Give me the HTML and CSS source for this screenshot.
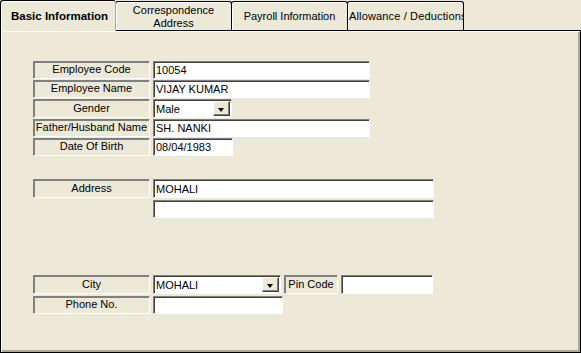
FILE: index.html
```html
<!DOCTYPE html>
<html lang="en">
<head>
  <meta charset="UTF-8"/>
  <title>Employee Details</title>
  <link rel="stylesheet" href="styles.css">
</head>
<body>

  <!-- Tab strip -->
  <div class="tabs">
    <div class="tab active">Basic Information</div>
    <div class="tab two-line">Correspondence<br>Address</div>
    <div class="tab">Payroll Information</div>
    <div class="tab">Allowance / Deductions</div>
  </div>

  <!-- Basic Information page -->
  <div class="panel">
    <div class="group">
      <div class="row">
        <div class="label">Employee Code</div>
        <div class="field w-long">10054</div>
      </div>
      <div class="row">
        <div class="label">Employee Name</div>
        <div class="field w-long">VIJAY KUMAR</div>
      </div>
      <div class="row tall">
        <div class="label">Gender</div>
        <div class="field combo w-gender">Male<span class="drop"></span></div>
      </div>
      <div class="row">
        <div class="label">Father/Husband Name</div>
        <div class="field w-long">SH. NANKI</div>
      </div>
      <div class="row">
        <div class="label">Date Of Birth</div>
        <div class="field w-date">08/04/1983</div>
      </div>
    </div>

    <div class="group address">
      <div class="row tall">
        <div class="label">Address</div>
        <div class="field w-addr">MOHALI</div>
      </div>
      <div class="row">
        <div class="spacer"></div>
        <div class="field w-addr"></div>
      </div>
    </div>

    <div class="group city">
      <div class="row tall">
        <div class="label">City</div>
        <div class="field combo w-city">MOHALI<span class="drop"></span></div>
        <div class="label small">Pin Code</div>
        <div class="field w-pin"></div>
      </div>
      <div class="row">
        <div class="label">Phone No.</div>
        <div class="field w-phone"></div>
      </div>
    </div>
  </div>

</body>
</html>
```

FILE: styles.css
```css
:root {
  --face: #ece9d8;
  --shadow: #808080;
  --dark: #404040;
  --edge: #aca899;
  --font: 'Liberation Sans', Arial, sans-serif;
}
* { margin:0; padding:0; box-sizing:border-box }
html, body { width:100%; height:100%; overflow:hidden }
body {
  background: var(--face);
  font-family: var(--font);
  font-size: 11px;
  color: #000;
}

/* Tabs */
.tabs {
  display:flex; align-items:flex-end;
  height:30px;
  position:relative; z-index:1;
}
.tab {
  width:117px; height:29px;
  margin-left:-1px;
  border:1px solid #000; border-bottom:none;
  border-radius:3px 3px 0 0;
  box-shadow: inset 1px 1px #fff;
  background: var(--face);
  display:flex; align-items:center; justify-content:center;
  text-align:center; white-space:nowrap;
  overflow:hidden;
  line-height:13px;
  padding-top:1px;
}
.tab:last-child { justify-content:flex-start; padding-left:1px; letter-spacing:0.15px }
.tab.active {
  width:116px; height:31px;
  margin-left:0; margin-bottom:-1px;
  border-right-color: var(--edge);
  font-weight:bold;
  font-size:11.5px;
  justify-content:flex-start;
  padding-left:10px;
  z-index:2;
}

/* Page */
.panel {
  height:323px;
  border:1px solid #000;
  box-shadow: inset 1px 1px #fff, inset -2px -2px var(--edge);
  padding:30px 0 0 32px;
}
.group { display:flex; flex-direction:column; gap:1px }
.group.address { margin-top:23px; gap:2px }
.group.city { margin-top:57px; gap:2px }

.row { display:flex; gap:3px; height:18px }
.row.tall { height:19px }

.label, .field {
  height:100%;
  border:1px solid;
  border-color: var(--shadow) #fff #fff var(--shadow);
  box-shadow: inset 1px 1px var(--dark);
  display:flex; align-items:center;
}
.label {
  width:117px;
  justify-content:center;
  background: var(--face);
  box-shadow: inset 1px 1px var(--shadow);
  padding-bottom:2px;
}
.label.small { width:54px }
.spacer { width:117px }
.field {
  background:#fff;
  padding-left:2px;
  position:relative;
}
.w-long  { width:217px }
.w-gender{ width:79px }
.w-date  { width:80px }
.w-addr  { width:281px }
.w-city  { width:128px }
.w-pin   { width:92px }
.w-phone { width:130px }

/* Combo drop button */
.combo .drop {
  position:absolute; right:1px; top:1px; bottom:1px;
  width:17px;
  background: var(--face);
  border:1px solid;
  border-color: #fff var(--dark) var(--dark) #fff;
  box-shadow: inset -1px -1px var(--shadow);
}
.combo .drop::after {
  content:''; position:absolute;
  left:4px; top:6px;
  border-left:3.5px solid transparent;
  border-right:3.5px solid transparent;
  border-top:4px solid #000;
}
```
